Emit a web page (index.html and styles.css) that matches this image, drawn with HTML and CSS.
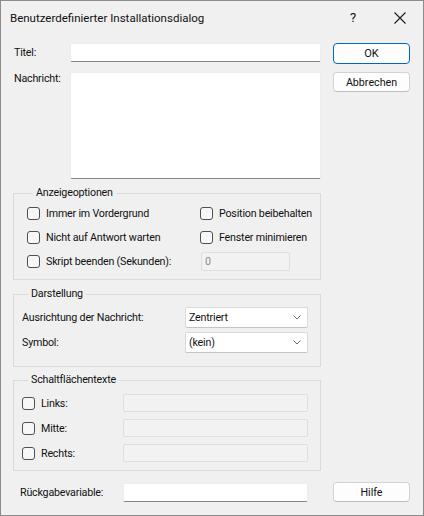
FILE: index.html
```html
<!DOCTYPE html>
<html lang="de">
<head>
    <meta charset="UTF-8">
    <title>Benutzerdefinierter Installationsdialog</title>
    <meta name="viewport" content="width=device-width, initial-scale=1.0">
    <link rel="stylesheet" href="styles.css">
</head>
<body>

    <div class="dialog">
        <div class="titlebar">
            <span class="caption">Benutzerdefinierter Installationsdialog</span>
            <span class="help-glyph">?</span>
            <span class="close-glyph">
                <svg width="12" height="12" viewBox="0 0 12 12">
                    <path d="M0.5 0.5 L11.5 11.5 M11.5 0.5 L0.5 11.5" stroke="#1a1a1a" stroke-width="1.1" fill="none"/>
                </svg>
            </span>
        </div>

        <div class="content">
            <div class="row row-title">
                <label class="row-label">Titel:</label>
                <input class="edit" type="text">
                <button class="btn btn-default">OK</button>
            </div>

            <div class="row row-message">
                <label class="row-label">Nachricht:</label>
                <textarea class="edit memo"></textarea>
                <button class="btn">Abbrechen</button>
            </div>

            <fieldset class="group group-options">
                <legend>Anzeigeoptionen</legend>
                <label class="option"><input class="check" type="checkbox"> Immer im Vordergrund</label>
                <label class="option"><input class="check" type="checkbox"> Position beibehalten</label>
                <label class="option"><input class="check" type="checkbox"> Nicht auf Antwort warten</label>
                <label class="option"><input class="check" type="checkbox"> Fenster minimieren</label>
                <label class="option"><input class="check" type="checkbox"> Skript beenden (Sekunden):</label>
                <input class="edit edit-off seconds" type="text" value="0" disabled>
            </fieldset>

            <fieldset class="group group-look">
                <legend>Darstellung</legend>
                <span>Ausrichtung der Nachricht:</span>
                <div class="combo">
                    <span>Zentriert</span>
                    <svg width="8" height="5" viewBox="0 0 8 5"><path d="M0.5 0.5 L4 4 L7.5 0.5" stroke="#6a6a6a" fill="none"/></svg>
                </div>
                <span>Symbol:</span>
                <div class="combo">
                    <span>(kein)</span>
                    <svg width="8" height="5" viewBox="0 0 8 5"><path d="M0.5 0.5 L4 4 L7.5 0.5" stroke="#6a6a6a" fill="none"/></svg>
                </div>
            </fieldset>

            <fieldset class="group group-buttons">
                <legend>Schaltflächentexte</legend>
                <label class="option"><input class="check" type="checkbox"> Links:</label>
                <input class="edit edit-off" type="text" disabled>
                <label class="option"><input class="check" type="checkbox"> Mitte:</label>
                <input class="edit edit-off" type="text" disabled>
                <label class="option"><input class="check" type="checkbox"> Rechts:</label>
                <input class="edit edit-off" type="text" disabled>
            </fieldset>

            <div class="row row-return">
                <label class="row-label">Rückgabevariable:</label>
                <input class="edit" type="text">
                <button class="btn">Hilfe</button>
            </div>
        </div>
    </div>

</body>
</html>
```

FILE: styles.css
```css
* {
    box-sizing: border-box;
    margin: 0;
    padding: 0;
}
body {
    font-family: Roboto, "Liberation Sans", Arial, sans-serif;
    font-size: 10.7px;
    letter-spacing: -0.2px;
    color: #111;
    background: #ffffff;
}
.dialog {
    width: 424px;
    height: 516px;
    background: #f0f0f0;
    border: 1px solid #8c8c8c;
}

/* window caption */
.titlebar {
    height: 30px;
    display: flex;
    align-items: center;
    padding-left: 9px;
}
.caption {
    flex: 1;
    font-size: 11.5px;
    letter-spacing: 0;
    padding-top: 3px;
}
.help-glyph {
    font-size: 13px;
    width: 10px;
    margin-right: 34px;
    padding-top: 2px;
}
.close-glyph {
    display: flex;
    margin-right: 17px;
    padding-top: 3px;
}

.content {
    padding: 12px 0 0 12px;
}
.row {
    display: flex;
    align-items: flex-start;
}
.row-label {
    line-height: 19px;
}
.row-title .row-label,
.row-message .row-label {
    width: 57px;
    padding-left: 1px;
}
.row-message {
    margin-top: 8px;
}
.row-message .row-label {
    line-height: 12px;
    padding-top: 1px;
}

/* edit boxes */
.edit {
    font: inherit;
    height: 19px;
    background: #fff;
    border: 1px solid #ededed;
    border-bottom-color: #868686;
    border-radius: 2px;
    padding: 0 3px;
    outline: none;
}
.row .edit {
    width: 251px;
}
.memo {
    height: 107px;
    resize: none;
}
.edit-off {
    background: #f2f2f2;
    border: 1px solid #dedede;
    color: #8a8a8a;
    height: 18px;
}

/* push buttons */
.btn {
    font: inherit;
    color: #111;
    width: 77px;
    height: 20px;
    margin-left: 12px;
    background: #fdfdfd;
    border: 1px solid #d3d3d3;
    border-bottom-color: #bdbdbd;
    border-radius: 4px;
}
.btn-default {
    border: 1px solid #0067c0;
    height: 21px;
    font-size: 11px;
}

/* group boxes */
.group {
    width: 308px;
    border: 1px solid #dadada;
    display: grid;
    align-items: center;
}
.group legend {
    line-height: 14px;
    margin-left: 6px;
    padding: 0 3px;
}
.group-options {
    margin-top: 7px;
    padding: 1px 0 6px 13px;
    grid-template-columns: 173px 1fr;
    grid-auto-rows: 24px;
}
.group-look {
    margin-top: 7px;
    padding: 6px 0 13px 8px;
    grid-template-columns: 163px 123px;
    grid-auto-rows: 21px;
    row-gap: 4px;
}
.group-buttons {
    margin-top: 6px;
    padding: 7px 0 8px 8px;
    grid-template-columns: 101px 185px;
    grid-auto-rows: 18px;
    row-gap: 7px;
}
.option {
    display: flex;
    align-items: center;
    gap: 6px;
}
.check {
    appearance: none;
    width: 13px;
    height: 13px;
    border: 1px solid #4f4f4f;
    border-radius: 3px;
    background: #f7f7f7;
}
.seconds {
    width: 89px;
    height: 19px;
    margin-left: 1px;
}
.group-buttons .edit-off {
    width: 185px;
}

/* drop-down lists */
.combo {
    height: 21px;
    background: #fff;
    border: 1px solid #d9d9d9;
    border-bottom-color: #c4c4c4;
    border-radius: 2px;
    display: flex;
    align-items: center;
    justify-content: space-between;
    padding: 0 6px 0 3px;
}

.row-return {
    margin-top: 11px;
    align-items: center;
}
.row-return .row-label {
    width: 110px;
    padding-left: 7px;
}
.row-return .edit {
    width: 185px;
}
.row-return .btn {
    margin-left: 25px;
}
```
